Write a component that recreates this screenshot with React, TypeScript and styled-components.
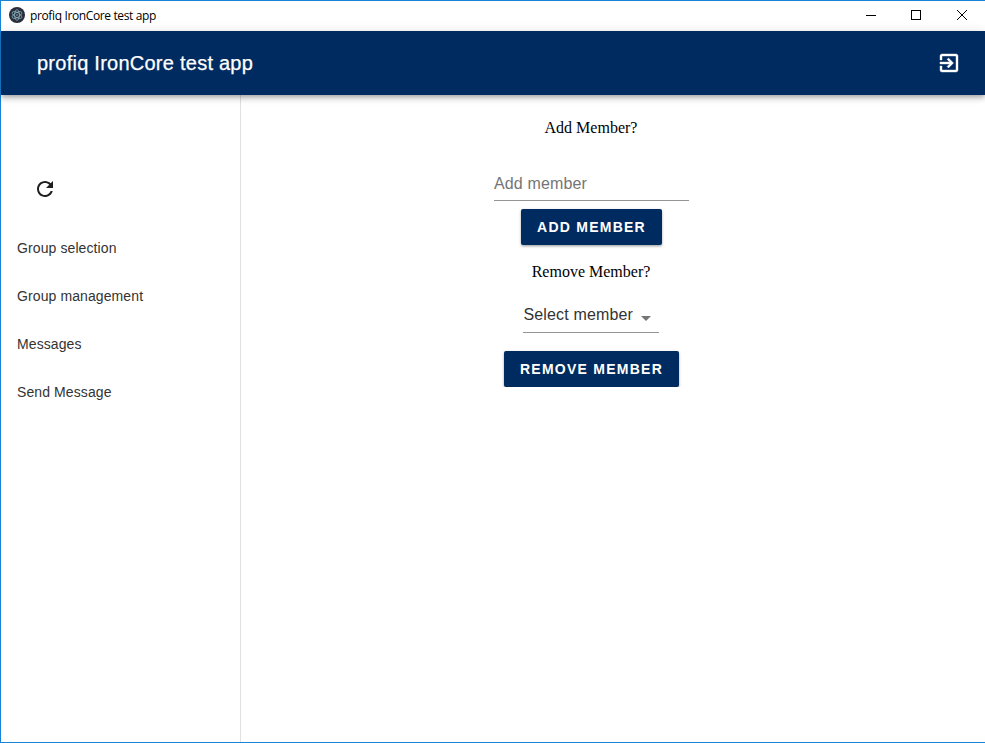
import React from "react";
import styled, { createGlobalStyle } from "styled-components";

const navy = "#002b60";
const accent = "#1883d7";

const GlobalStyle = createGlobalStyle`
  *, *::before, *::after { box-sizing: border-box; }
  body { margin: 0; background: #fff; overflow: hidden; }
`;

const Window = styled.div`
  display: flex;
  flex-direction: column;
  height: 743px;
  border: solid ${accent};
  border-width: 1px 0 1px 1px;
  background: #fff;
  font-family: "Liberation Sans", Arial, sans-serif;
`;

const TitleBar = styled.div`
  display: flex;
  align-items: center;
  flex: 0 0 30px;
  padding-left: 8px;
  background: #fff;
`;

const LogoSvg = styled.svg`
  display: block;
  width: 16px;
  height: 16px;
  margin-bottom: 2px;
`;

const WindowTitle = styled.span`
  flex: 1;
  margin-left: 5px;
  font: 12px/16px "Open Sans", "Noto Sans", sans-serif;
  letter-spacing: -0.37px;
  color: #000;
`;

const Controls = styled.div`
  display: flex;
`;

const Control = styled.div<{ $width?: number }>`
  display: flex;
  align-items: center;
  justify-content: center;
  width: ${(p) => p.$width ?? 45}px;
  height: 30px;
  padding-bottom: 2px;
`;

const AppBar = styled.header`
  display: flex;
  align-items: center;
  justify-content: space-between;
  flex: 0 0 64px;
  padding: 0 24px 0 36px;
  background: ${navy};
  color: #fff;
  z-index: 1;
  box-shadow: 0 2px 4px -1px rgba(0, 0, 0, 0.2), 0 4px 5px 0 rgba(0, 0, 0, 0.14),
    0 1px 10px 0 rgba(0, 0, 0, 0.12);
`;

const AppTitle = styled.h1`
  margin: 0;
  font-size: 20px;
  font-weight: 400;
  line-height: 32px;
  letter-spacing: 0.25px;
  -webkit-text-stroke: 0.25px #fff;
`;

const Icon = styled.svg`
  display: block;
  width: 24px;
  height: 24px;
  fill: currentColor;
`;

const ExitIcon = styled(Icon)`
  stroke: #fff;
  stroke-width: 0.4px;
`;

const Body = styled.div`
  display: flex;
  flex: 1;
`;

const Sidebar = styled.aside`
  width: 240px;
  padding-top: 82px;
  border-right: 1px solid #e0e0e0;
`;

const RefreshButton = styled.div`
  width: 24px;
  margin: 0 0 23px 32px;
  color: #1f1f1f;
`;

const NavItem = styled.div`
  display: flex;
  align-items: center;
  height: 48px;
  padding: 0 16px;
  font-size: 14px;
  letter-spacing: 0.1px;
  color: #333;
`;

const Main = styled.main`
  display: flex;
  flex-direction: column;
  align-items: center;
  width: 701px;
`;

const Question = styled.p<{ $top: number }>`
  margin: ${(p) => p.$top}px 1px 0 0;
  font: 16px/18px "Liberation Serif", "Times New Roman", serif;
  color: #000;
`;

const TextField = styled.input`
  width: 195px;
  height: 34px;
  margin-top: 30px;
  padding: 1px 0 0;
  border: 0;
  border-bottom: 1px solid #949494;
  outline: 0;
  background: transparent;
  font: 16px "Liberation Sans", Arial, sans-serif;
  letter-spacing: 0.15px;
  &::placeholder { color: #757575; opacity: 1; }
`;

const SelectField = styled.div`
  display: flex;
  width: 136px;
  height: 32px;
  margin: 20px 1px 0 0;
  padding-left: 0.5px;
  border-bottom: 1px solid #949494;
  font-size: 16px;
  line-height: 27px;
  letter-spacing: 0.15px;
  color: #333;
`;

const Caret = styled.svg`
  width: 10px;
  height: 5px;
  margin: 15px 0 0 7.5px;
  fill: #757575;
`;

const Button = styled.button<{ $width: number; $top: number; $flat?: boolean }>`
  width: ${(p) => p.$width}px;
  height: 36px;
  margin-top: ${(p) => p.$top}px;
  padding: 0;
  border: 0;
  border-radius: 2px;
  background: ${navy};
  color: #fff;
  font: bold 14px/36px "Liberation Sans", Arial, sans-serif;
  letter-spacing: 1.25px;
  text-transform: uppercase;
  white-space: nowrap;
  box-shadow: 0 1px 3px rgba(0, 0, 0, 0.28), 0 2px 2px rgba(0, 0, 0, 0.1);
  clip-path: ${(p) => (p.$flat ? "inset(-4px -4px 0 -4px)" : "none")};
`;

const AppLogo = () => (
  <LogoSvg viewBox="0 0 16 16">
    <circle cx="8" cy="8" r="8" fill="#2b2e3a" />
    <g fill="none" stroke="#a5dbe6" strokeOpacity="0.8" strokeWidth="0.7">
      <ellipse cx="8" cy="8" rx="5.4" ry="2.4" transform="rotate(30 8 8)" />
      <ellipse cx="8" cy="8" rx="5.4" ry="2.4" transform="rotate(90 8 8)" />
      <ellipse cx="8" cy="8" rx="5.4" ry="2.4" transform="rotate(150 8 8)" />
    </g>
    <circle cx="8" cy="8" r="0.7" fill="#a5dbe6" />
  </LogoSvg>
);

const navItems = ["Group selection", "Group management", "Messages", "Send Message"];

export default function App() {
  return (
    <>
      <GlobalStyle />
      <Window>
        <TitleBar>
          <AppLogo />
          <WindowTitle>profiq IronCore test app</WindowTitle>
          <Controls>
            <Control>
              <svg width="11" height="11" stroke="#000" shapeRendering="crispEdges">
                <path d="M0 5.5h10" />
              </svg>
            </Control>
            <Control>
              <svg width="11" height="11" fill="none" stroke="#000" shapeRendering="crispEdges">
                <rect x="0.5" y="0.5" width="9" height="9" />
              </svg>
            </Control>
            <Control $width={46}>
              <svg width="11" height="11" stroke="#000">
                <path d="M0 0l10 10M10 0l-10 10" />
              </svg>
            </Control>
          </Controls>
        </TitleBar>
        <AppBar>
          <AppTitle>profiq IronCore test app</AppTitle>
          <ExitIcon viewBox="0 0 24 24">
            <path d="M10.09 15.59L11.5 17l5-5-5-5-1.41 1.41L12.67 11H3v2h9.67l-2.58 2.59zM19 3H5c-1.11 0-2 .9-2 2v4h2V5h14v14H5v-4H3v4c0 1.1.89 2 2 2h14c1.1 0 2-.9 2-2V5c0-1.1-.9-2-2-2z" />
          </ExitIcon>
        </AppBar>
        <Body>
          <Sidebar>
            <RefreshButton>
              <Icon viewBox="0 0 24 24">
                <path d="M17.65 6.35C16.2 4.9 14.21 4 12 4c-4.42 0-7.99 3.58-7.99 8s3.57 8 7.99 8c3.73 0 6.84-2.55 7.73-6h-2.08c-.82 2.33-3.04 4-5.65 4-3.31 0-6-2.69-6-6s2.69-6 6-6c1.66 0 3.14.69 4.22 1.78L13 11h7V4l-2.35 2.35z" />
              </Icon>
            </RefreshButton>
            {navItems.map((item) => (
              <NavItem key={item}>{item}</NavItem>
            ))}
          </Sidebar>
          <Main>
            <Question $top={24}>Add Member?</Question>
            <TextField placeholder="Add member" />
            <Button $width={141} $top={8}>Add member</Button>
            <Question $top={18}>Remove Member?</Question>
            <SelectField>
              Select member
              <Caret viewBox="0 0 10 5">
                <path d="M0 0h10L5 5z" />
              </Caret>
            </SelectField>
            <Button $width={175} $top={18} $flat>Remove member</Button>
          </Main>
        </Body>
      </Window>
    </>
  );
}
